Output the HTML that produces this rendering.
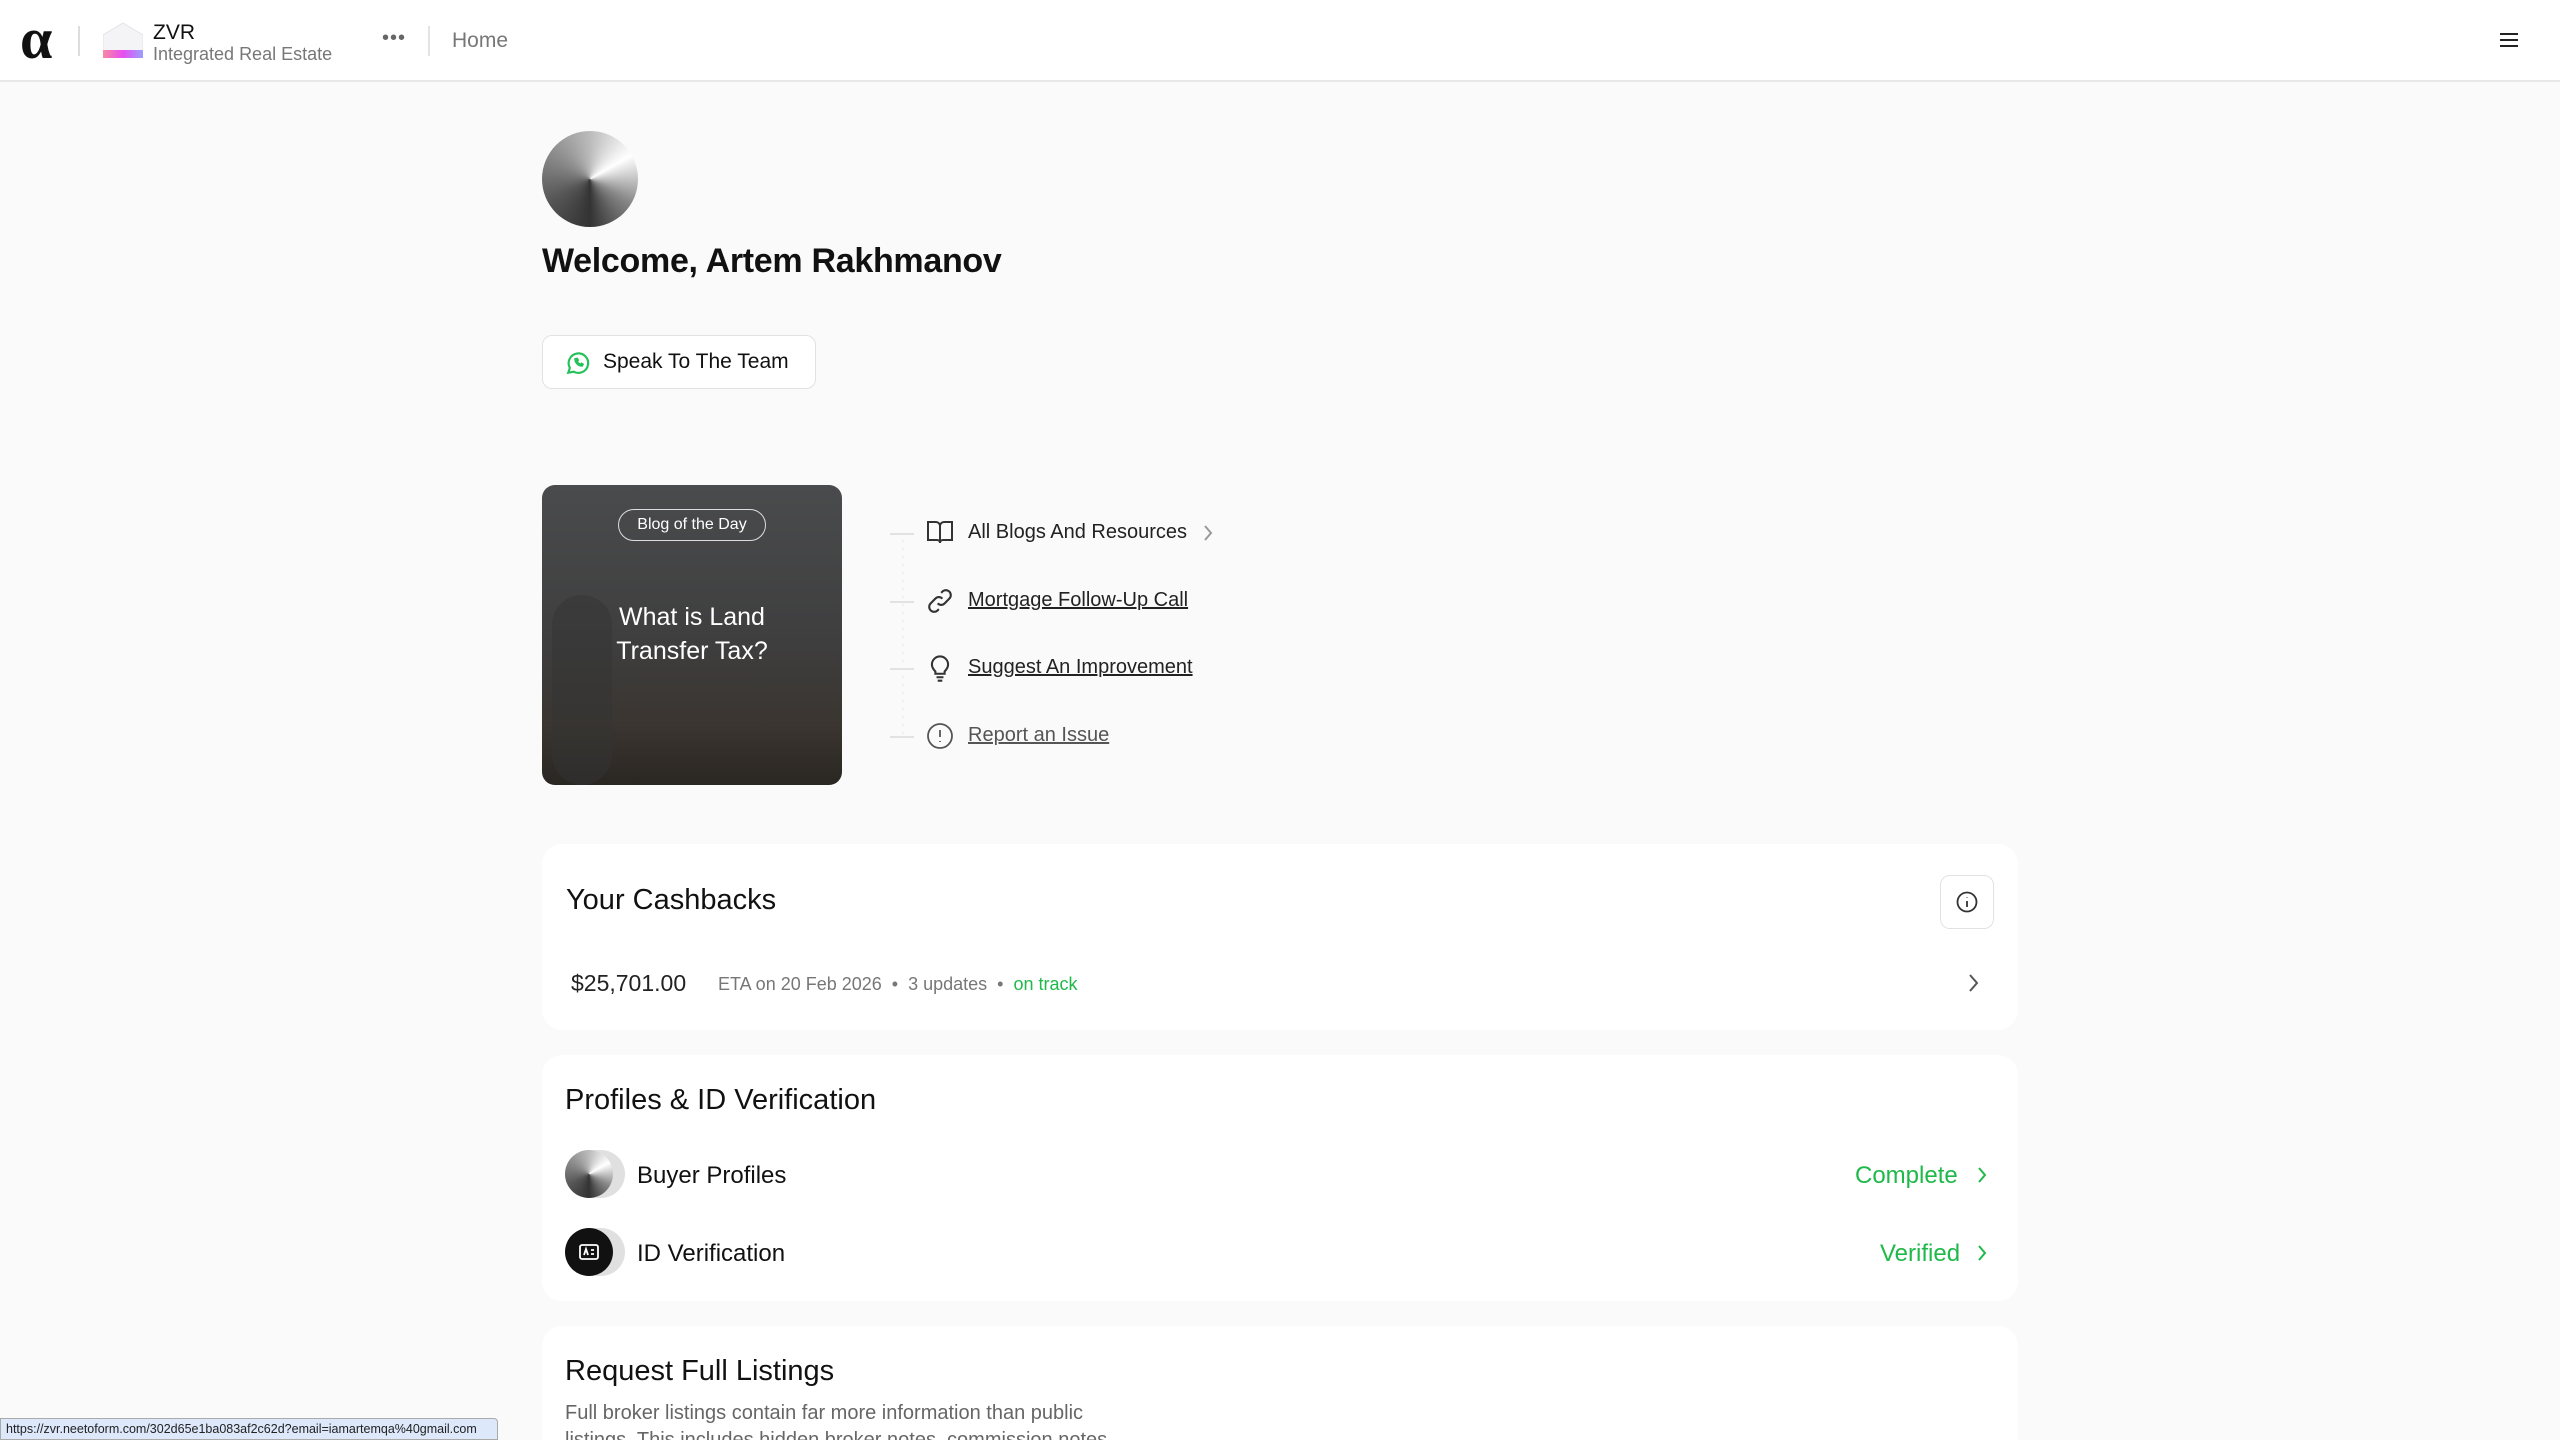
<!DOCTYPE html>
<html style="width:2560px;height:1440px;overflow:hidden"><head><meta charset="utf-8"><style>
*{box-sizing:border-box;margin:0;padding:0}
body{width:2560px;height:1440px;overflow:hidden;background:#fafafa;font-family:"Liberation Sans",sans-serif;color:#111;position:relative}
.abs{position:absolute}
.hdr{left:0;top:0;width:2560px;height:82px;background:#fff;border-bottom:2px solid #e8e8e8}
.card{background:#fff;border-radius:20px;position:absolute;left:542px;width:1476px}
.lnk{position:absolute;left:968px;font-size:20px;color:#222;white-space:nowrap}
.dash{position:absolute;left:890px;width:24px;height:2px;background:#e2e2e2}
.ico{position:absolute;left:926px}
.green{color:#1fb94a}
</style></head><body>
<div class="abs hdr">
  <div class="abs" style="left:20px;top:8px;font-family:'Liberation Serif',serif;font-size:58px;line-height:62px;font-weight:bold">α</div>
  <div class="abs" style="left:78px;top:26px;width:2px;height:30px;background:#ddd"></div>
  <svg class="abs" style="left:103px;top:22px" width="40" height="36" viewBox="0 0 40 36"><defs><linearGradient id="lg" x1="0" x2="1"><stop offset="0" stop-color="#f78aa0"/><stop offset=".5" stop-color="#e84cf0"/><stop offset="1" stop-color="#9aa0ff"/></linearGradient></defs><path d="M0 13 L20 1 L40 13 V36 H0Z" fill="#f4f4f6" stroke="#e4e4e8"/><rect x="0" y="28" width="40" height="8" fill="url(#lg)"/></svg>
  <div class="abs" style="left:153px;top:21px;font-size:21px">ZVR</div>
  <div class="abs" style="left:153px;top:44px;font-size:18px;color:#777">Integrated Real Estate</div>
  <div class="abs" style="left:382px;top:27px;font-size:20px;color:#666;letter-spacing:1px">•••</div>
  <div class="abs" style="left:428px;top:26px;width:2px;height:30px;background:#e4e4e4"></div>
  <div class="abs" style="left:452px;top:29px;font-size:21px;color:#777">Home</div>
  <div class="abs" style="left:2500px;top:33px;width:18px;height:2px;background:#222;box-shadow:0 6px 0 #222,0 12px 0 #222"></div>
</div>

<div class="abs" style="left:542px;top:131px;width:96px;height:96px;border-radius:50%;background:conic-gradient(from 0deg,#bbb,#fff 60deg,#888 120deg,#333 180deg,#555 240deg,#888 300deg,#bbb)"></div>
<div class="abs" style="left:542px;top:242px;font-size:34px;font-weight:bold;letter-spacing:-0.3px">Welcome, Artem Rakhmanov</div>
<div class="abs" style="left:542px;top:335px;width:274px;height:54px;background:#fff;border:1.5px solid #e2e2e2;border-radius:10px">
  <svg class="abs" style="left:22px;top:14px" width="26" height="26" viewBox="0 0 24 24" fill="none" stroke="#25c15a" stroke-width="2"><path d="M3 21l1.5-4.5A9 9 0 1 1 8 20Z"/><path d="M9 8c0 4 3 7 7 7l1-2-2-1-1 1c-1-.5-2-1.5-2.5-2.5l1-1-1-2Z" fill="#25c15a" stroke-width="1"/></svg>
  <div class="abs" style="left:60px;top:14px;font-size:21px">Speak To The Team</div>
</div>

<div class="abs" style="left:542px;top:485px;width:300px;height:300px;border-radius:13px;overflow:hidden;background:linear-gradient(180deg,#4a4b4c 0%,#3f3f40 50%,#3a3530 80%,#2a2622 100%)">
  <div class="abs" style="left:10px;top:110px;width:60px;height:190px;background:#333;opacity:.5;border-radius:30px"></div>
  <div class="abs" style="left:76px;top:24px;width:148px;height:32px;border:1.5px solid #ddd;border-radius:16px;color:#fff;font-size:16px;text-align:center;line-height:29px">Blog of the Day</div>
  <div class="abs" style="left:0;top:115px;width:300px;text-align:center;color:#fff;font-size:25px;line-height:34px">What is Land<br>Transfer Tax?</div>
</div>

<div class="abs" style="left:902px;top:540px;width:2px;height:200px;background:repeating-linear-gradient(#f0f0f0 0 2px,transparent 2px 8px)"></div>
<div class="dash" style="top:533px"></div>
<div class="dash" style="top:601px"></div>
<div class="dash" style="top:668px"></div>
<div class="dash" style="top:736px"></div>
<svg class="ico" style="top:519px" width="28" height="26" viewBox="0 0 28 26" fill="none" stroke="#333" stroke-width="2"><path d="M2 3h8a4 4 0 0 1 4 4v17a3 3 0 0 0-3-3H2Z"/><path d="M26 3h-8a4 4 0 0 0-4 4v17a3 3 0 0 1 3-3h9Z"/></svg>
<div class="lnk" style="top:521px">All Blogs And Resources</div>
<svg class="abs" style="left:1201px;top:524px" width="14" height="18" viewBox="0 0 14 18" fill="none" stroke="#999" stroke-width="2"><path d="M4 2l6 7-6 7"/></svg>
<svg class="ico" style="top:587px" width="28" height="28" viewBox="0 0 24 24" fill="none" stroke="#333" stroke-width="1.8"><path d="M10 14a4 4 0 0 0 6 0l4-4a4 4 0 0 0-6-6l-1 1"/><path d="M14 10a4 4 0 0 0-6 0l-4 4a4 4 0 0 0 6 6l1-1"/></svg>
<div class="lnk" style="top:589px;text-decoration:underline">Mortgage Follow-Up Call</div>
<svg class="ico" style="top:653px" width="28" height="30" viewBox="0 0 24 26" fill="none" stroke="#333" stroke-width="1.8"><path d="M8 16c-2-2-3-4-3-6a7 7 0 0 1 14 0c0 2-1 4-3 6v2H8Z"/><path d="M9 21h6M10 24h4"/></svg>
<div class="lnk" style="top:656px;text-decoration:underline">Suggest An Improvement</div>
<svg class="ico" style="top:722px" width="28" height="28" viewBox="0 0 28 28" fill="none" stroke="#555" stroke-width="1.8"><circle cx="14" cy="14" r="12"/><path d="M14 8v7M14 19v1"/></svg>
<div class="lnk" style="top:724px;text-decoration:underline;color:#555">Report an Issue</div>

<div class="card" style="top:844px;height:186px">
  <div class="abs" style="left:24px;top:40px;font-size:29px">Your Cashbacks</div>
  <div class="abs" style="left:1398px;top:31px;width:54px;height:54px;border:1.5px solid #e2e2e2;border-radius:10px">
    <svg class="abs" style="left:15px;top:15px" width="22" height="22" viewBox="0 0 22 22" fill="none" stroke="#333" stroke-width="1.8"><circle cx="11" cy="11" r="9.5"/><path d="M11 10v6M11 6.5v.5"/></svg>
  </div>
  <div class="abs" style="left:29px;top:126px;font-size:23px;color:#222">$25,701.00</div>
  <div class="abs" style="left:176px;top:130px;font-size:18px;color:#777">ETA on 20 Feb 2026 &nbsp;•&nbsp; 3 updates &nbsp;•&nbsp; <span class="green">on track</span></div>
  <svg class="abs" style="left:1424px;top:128px" width="14" height="22" viewBox="0 0 14 22" fill="none" stroke="#555" stroke-width="2"><path d="M4 3l7 8-7 8"/></svg>
</div>

<div class="card" style="top:1055px;height:246px">
  <div class="abs" style="left:23px;top:29px;font-size:29px">Profiles &amp; ID Verification</div>
  <div class="abs" style="left:23px;top:95px;width:60px;height:48px;border-radius:24px;background:#e0e0e0"></div>
  <div class="abs" style="left:23px;top:95px;width:48px;height:48px;border-radius:50%;background:conic-gradient(from 0deg,#bbb,#fff 60deg,#888 120deg,#333 180deg,#555 240deg,#888 300deg,#bbb)"></div>
  <div class="abs" style="left:95px;top:107px;font-size:24px">Buyer Profiles</div>
  <div class="abs green" style="left:1313px;top:107px;font-size:24px">Complete</div>
  <svg class="abs" style="left:1434px;top:110px" width="12" height="20" viewBox="0 0 12 20" fill="none" stroke="#1fb94a" stroke-width="2"><path d="M3 3l6 7-6 7"/></svg>
  <div class="abs" style="left:23px;top:173px;width:60px;height:48px;border-radius:24px;background:#e0e0e0"></div>
  <div class="abs" style="left:23px;top:173px;width:48px;height:48px;border-radius:50%;background:#111">
    <svg class="abs" style="left:14px;top:16px" width="20" height="16" viewBox="0 0 20 16" fill="none" stroke="#fff" stroke-width="1.8"><rect x="1" y="1" width="18" height="14" rx="2"/><path d="M5 11l2-6 2 6M12 6h3M12 10h3"/></svg>
  </div>
  <div class="abs" style="left:95px;top:185px;font-size:24px">ID Verification</div>
  <div class="abs green" style="left:1338px;top:185px;font-size:24px">Verified</div>
  <svg class="abs" style="left:1434px;top:188px" width="12" height="20" viewBox="0 0 12 20" fill="none" stroke="#1fb94a" stroke-width="2"><path d="M3 3l6 7-6 7"/></svg>
</div>

<div class="card" style="top:1326px;height:114px;border-radius:20px 20px 0 0">
  <div class="abs" style="left:23px;top:29px;font-size:29px">Request Full Listings</div>
  <div class="abs" style="left:23px;top:74px;font-size:20px;color:#666;line-height:27px;width:560px">Full broker listings contain far more information than public listings. This includes hidden broker notes, commission notes</div>
</div>

<div class="abs" style="left:0;top:1418px;width:498px;height:22px;background:#dde8fb;border:1px solid #aaa;border-radius:0 4px 0 0;font-size:12.5px;color:#222;padding:3px 5px;white-space:nowrap;overflow:hidden">https://zvr.neetoform.com/302d65e1ba083af2c62d?email=iamartemqa%40gmail.com</div>
</body></html>
